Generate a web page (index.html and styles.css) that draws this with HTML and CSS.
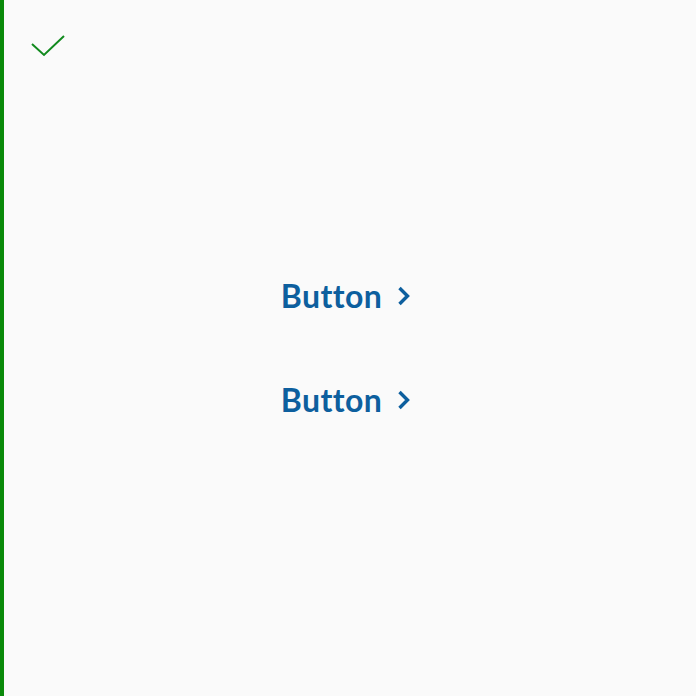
FILE: index.html
```html
<!DOCTYPE html>
<html>
	<head>
		<meta charset="UTF-8">
		<title>Buttons</title>
		<link rel="stylesheet" href="styles.css">
	</head>
	<body>
		<div class="page">
			<div class="status">
				<svg width="36" height="28" viewBox="0 0 36 28">
					<path d="M2 12 L14 23 L34 4" fill="none" stroke="#118a1e" stroke-width="2"/>
				</svg>
			</div>
			<div class="buttons">
				<a href="javascript:;" class="link-btn">Button
					<svg width="14" height="20" viewBox="0 0 14 20"><path d="M2.5 2 L10.5 10 L2.5 18" fill="none" stroke="#0d5f9e" stroke-width="3.4"/></svg>
				</a>
				<a href="javascript:;" class="link-btn">Button
					<svg width="14" height="20" viewBox="0 0 14 20"><path d="M2.5 2 L10.5 10 L2.5 18" fill="none" stroke="#0d5f9e" stroke-width="3.4"/></svg>
				</a>
			</div>
		</div>
	</body>
</html>
```

FILE: styles.css
```css
*{
	margin: 0;
	padding: 0;
}
body{
	background: #fafafa;
	font-family: "Lato", "Liberation Sans", sans-serif;
}
.page{
	height: 696px;
	border-left: 4px solid #0a8a0a;
	position: relative;
	display: flex;
	align-items: center;
	justify-content: center;
}
.status{
	position: absolute;
	left: 26px;
	top: 32px;
	line-height: 0;
}
.buttons{
	display: flex;
	flex-direction: column;
	align-items: center;
	gap: 66px;
	margin-left: -8px;
}
.link-btn{
	display: flex;
	align-items: center;
	gap: 15px;
	font-size: 32px;
	font-weight: 700;
	letter-spacing: 0.4px;
	color: #0d5f9e;
	text-decoration: none;
	line-height: 38px;
}
```
